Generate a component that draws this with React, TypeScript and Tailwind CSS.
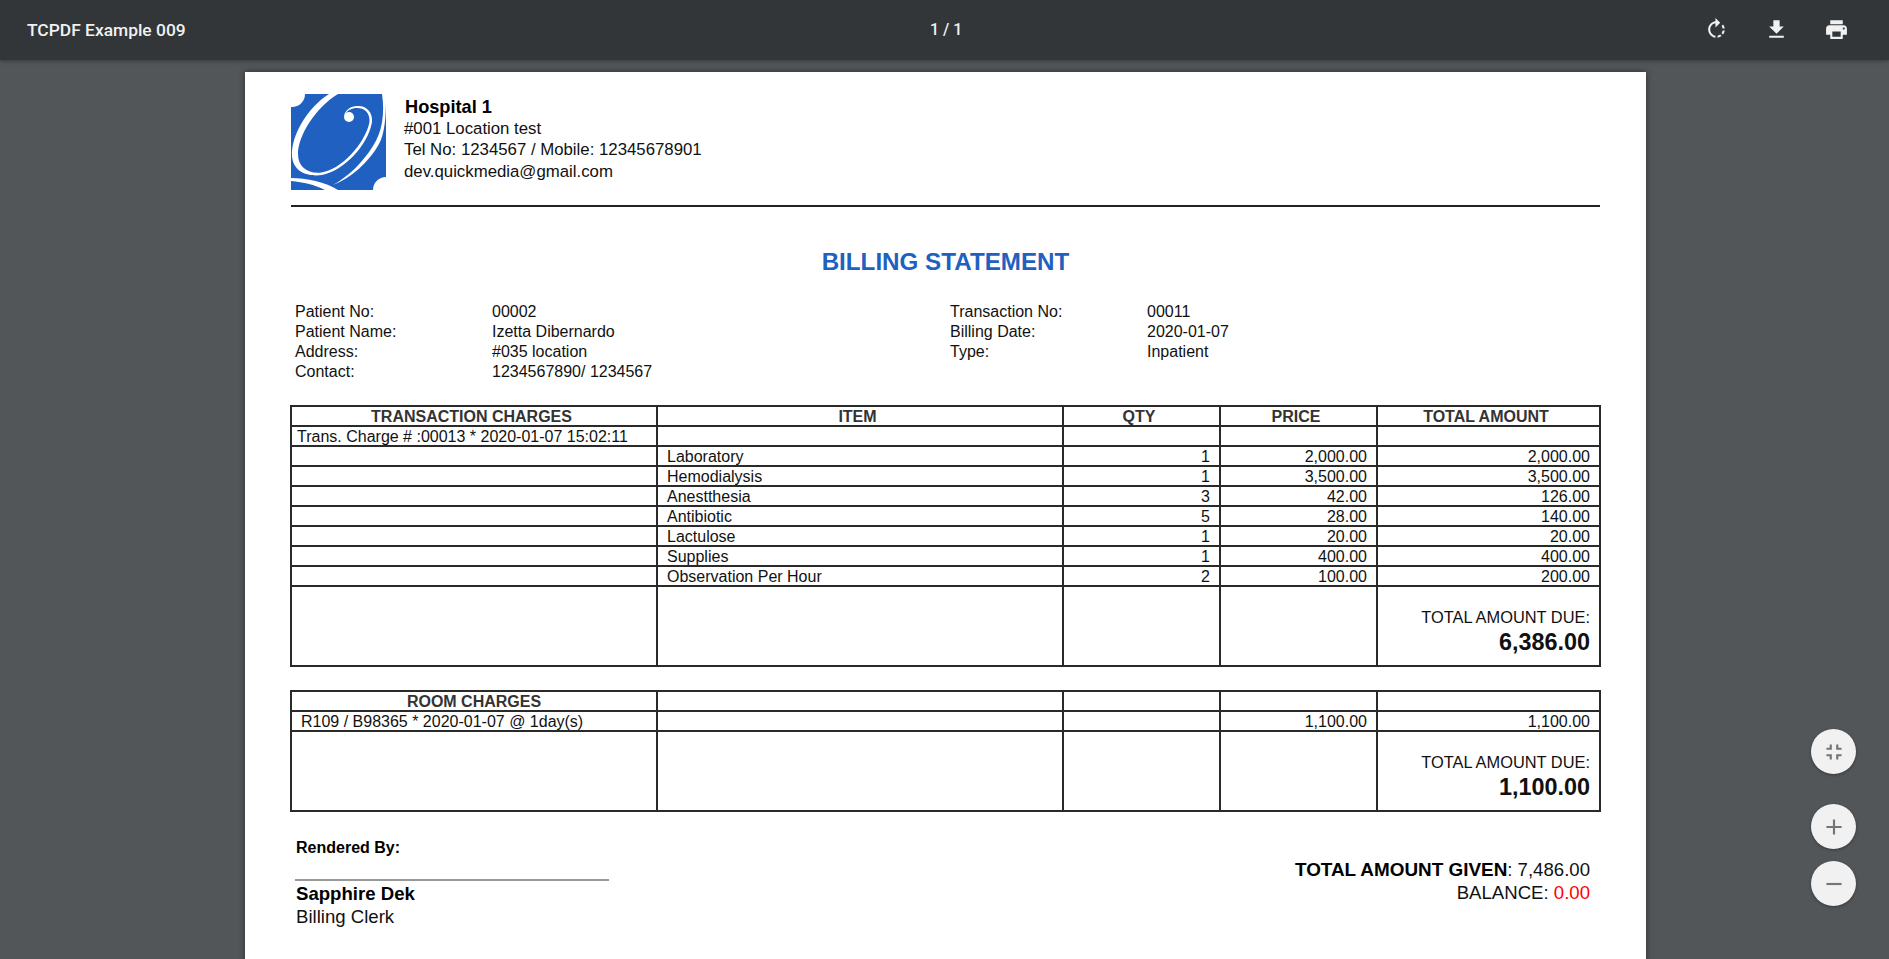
import React from 'react';

const CHARGES = [
  { item: 'Laboratory', qty: '1', price: '2,000.00', total: '2,000.00' },
  { item: 'Hemodialysis', qty: '1', price: '3,500.00', total: '3,500.00' },
  { item: 'Anestthesia', qty: '3', price: '42.00', total: '126.00' },
  { item: 'Antibiotic', qty: '5', price: '28.00', total: '140.00' },
  { item: 'Lactulose', qty: '1', price: '20.00', total: '20.00' },
  { item: 'Supplies', qty: '1', price: '400.00', total: '400.00' },
  { item: 'Observation Per Hour', qty: '2', price: '100.00', total: '200.00' }
];

const PATIENT = [
  ['Patient No:', '00002'],
  ['Patient Name:', 'Izetta Dibernardo'],
  ['Address:', '#035 location'],
  ['Contact:', '1234567890/ 1234567']
];

const BILLING = [
  ['Transaction No:', '00011'],
  ['Billing Date:', '2020-01-07'],
  ['Type:', 'Inpatient']
];

const cell = 'border-2 border-[#2a2a2a] h-[20px] p-0 pt-[2px] leading-[16px] align-middle overflow-hidden whitespace-nowrap';
const head = `${cell} font-bold text-[#333] text-center`;
const headPad = `${head} pr-[5px]`;
const circleBtn = 'w-[45px] h-[45px] rounded-full bg-[#f1f1f1] text-[#757575] flex items-center justify-center shadow-[0_1px_3px_rgba(0,0,0,0.35)]';

function Icon({ d, size = 25, className }: { d: string; size?: number; className?: string }) {
  return (
    <svg width={size} height={size} viewBox="0 0 24 24" fill="currentColor" className={className}>
      <path d={d} />
    </svg>
  );
}

function Logo() {
  return (
    <svg width="95" height="96" viewBox="0 0 95 96" className="shrink-0">
      <rect width="95" height="96" fill="#1f60c0" />
      <circle cx="1" cy="0" r="13" fill="#fff" />
      <circle cx="95" cy="96" r="13" fill="#fff" />
      <path fill="#fff" d="M38 0C16 14 0 42 1 62C2 78 17 83 31 81C52 77 77 52 81 28C82 17 74 11 66 12C60 12 54 16 53 22C56 16 61 14 66 14C73 14 79 18 78.5 28C74 50 50 76 30 78.5C18 80 7 74 7 60C7 42 24 14 47 0Z" />
      <circle cx="58" cy="23" r="5" fill="#fff" />
      <path fill="#fff" d="M91 0C94 20 91 38 82 52C72 68 58 82 42 91C60 84 78 68 88 50C94 40 95 20 95 5V0Z" />
      <path fill="#fff" d="M0 84C15 84 35 88 47 96H34C25 91 12 88 0 87Z" />
    </svg>
  );
}

function Columns() {
  return (
    <colgroup>
      <col className="w-[366px]" />
      <col className="w-[406px]" />
      <col className="w-[157px]" />
      <col className="w-[157px]" />
      <col className="w-[223px]" />
    </colgroup>
  );
}

function DueRow({ amount }: { amount: string }) {
  return (
    <tr>
      <td className="border-2 border-[#2a2a2a] h-[80px] p-0" />
      <td className="border-2 border-[#2a2a2a] p-0" />
      <td className="border-2 border-[#2a2a2a] p-0" />
      <td className="border-2 border-[#2a2a2a] p-0" />
      <td className="border-2 border-[#2a2a2a] p-0 pr-[9px] text-right align-top">
        <div className="mt-[20px] leading-[20px] text-[16.4px]">TOTAL AMOUNT DUE:</div>
        <div className="mt-[1px] leading-[28px] text-[23.4px] font-bold text-[#111]">{amount}</div>
      </td>
    </tr>
  );
}

export default function App() {
  return (
    <div className="h-screen overflow-hidden flex flex-col bg-[#525659] font-['Liberation_Sans',sans-serif]">
      {/* Toolbar */}
      <div className="relative z-10 h-[60px] shrink-0 flex items-center bg-[#323639] text-[#f1f1f1] shadow-[0_1px_4px_rgba(0,0,0,0.35)] font-['Roboto',sans-serif]">
        <div className="w-[1889px] flex items-center pl-[27px] pr-[40px]">
          <div className="w-[903px] text-[17.4px] font-medium">TCPDF Example 009</div>
          <div className="text-[16px] font-medium">1 / 1</div>
          <div className="ml-auto flex items-center gap-[35px]">
            <Icon d="M15.55 5.55L11 1v3.07C7.06 4.56 4 7.92 4 12s3.05 7.44 7 7.93v-2.02c-2.84-.48-5-2.94-5-5.91s2.16-5.43 5-5.91V10l4.55-4.45zM19.93 11c-.17-1.39-.72-2.73-1.62-3.89l-1.42 1.42c.54.75.88 1.6 1.02 2.47h2.02zM13 17.9v2.02c1.39-.17 2.74-.71 3.9-1.61l-1.44-1.44c-.75.54-1.59.89-2.46 1.03zm3.89-2.42l1.42 1.41c.9-1.16 1.45-2.5 1.62-3.89h-2.02c-.14.87-.48 1.72-1.02 2.48z" />
            <Icon d="M19 9h-4V3H9v6H5l7 7 7-7zM5 18v2h14v-2H5z" />
            <Icon d="M19 8H5c-1.66 0-3 1.34-3 3v6h4v4h12v-4h4v-6c0-1.66-1.34-3-3-3zm-3 11H8v-5h8v5zm3-7c-.55 0-1-.45-1-1s.45-1 1-1 1 .45 1 1-.45 1-1 1zm-1-9H6v4h12V3z" />
          </div>
        </div>
      </div>

      {/* Page */}
      <div className="relative flex-1 overflow-hidden">
        <div className="mt-[12px] ml-[245px] w-[1401px] h-[1000px] bg-white px-[46px] pt-[22px] text-[16px] text-[#111] shadow-[0_0_6px_rgba(0,0,0,0.45)]">
          {/* Hospital header */}
          <div className="flex items-start gap-[19px] h-[113px] border-b-2 border-[#222]">
            <Logo />
            <div className="pt-[2px]">
              <div className="text-[18.2px] font-bold text-black leading-[22px]">Hospital 1</div>
              <div className="text-[16.8px] leading-[21.3px] -ml-[1px]">#001 Location test</div>
              <div className="text-[16.8px] leading-[21.3px] -ml-[1px]">Tel No: 1234567 / Mobile: 12345678901</div>
              <div className="text-[16.8px] leading-[21.3px] -ml-[1px]">dev.quickmedia@gmail.com</div>
            </div>
          </div>

          <h1 className="mt-[41px] text-center text-[24.2px] leading-[28px] font-bold text-[#1f60c0]">BILLING STATEMENT</h1>

          {/* Patient info */}
          <div className="mt-[26px] flex pl-[4px] leading-[20px]">
            <div className="w-[655px]">
              {PATIENT.map(([label, value]) => (
                <div key={label} className="flex">
                  <div className="w-[197px]">{label}</div>
                  <div>{value}</div>
                </div>
              ))}
            </div>
            <div>
              {BILLING.map(([label, value]) => (
                <div key={label} className="flex">
                  <div className="w-[197px]">{label}</div>
                  <div>{value}</div>
                </div>
              ))}
            </div>
          </div>

          {/* Transaction charges */}
          <table className="mt-[23px] -ml-[1px] w-[1309px] table-fixed border-collapse border-[#2a2a2a]">
            <Columns />
            <thead>
              <tr>
                <th className={headPad}>TRANSACTION CHARGES</th>
                <th className={headPad}>ITEM</th>
                <th className={headPad}>QTY</th>
                <th className={headPad}>PRICE</th>
                <th className={headPad}>TOTAL AMOUNT</th>
              </tr>
            </thead>
            <tbody>
              <tr>
                <td className={`${cell} pl-[5px]`}>Trans. Charge # :00013 * 2020-01-07 15:02:11</td>
                <td className={cell} />
                <td className={cell} />
                <td className={cell} />
                <td className={cell} />
              </tr>
              {CHARGES.map((row) => (
                <tr key={row.item}>
                  <td className={cell} />
                  <td className={`${cell} pl-[9px]`}>{row.item}</td>
                  <td className={`${cell} pr-[9px] text-right`}>{row.qty}</td>
                  <td className={`${cell} pr-[9px] text-right`}>{row.price}</td>
                  <td className={`${cell} pr-[9px] text-right`}>{row.total}</td>
                </tr>
              ))}
              <DueRow amount="6,386.00" />
            </tbody>
          </table>

          {/* Room charges */}
          <table className="mt-[23px] -ml-[1px] w-[1309px] table-fixed border-collapse border-[#2a2a2a]">
            <Columns />
            <thead>
              <tr>
                <th className={head}>ROOM CHARGES</th>
                <th className={head} />
                <th className={head} />
                <th className={head} />
                <th className={head} />
              </tr>
            </thead>
            <tbody>
              <tr>
                <td className={`${cell} pl-[9px]`}>R109 / B98365 * 2020-01-07 @ 1day(s)</td>
                <td className={cell} />
                <td className={cell} />
                <td className={`${cell} pr-[9px] text-right`}>1,100.00</td>
                <td className={`${cell} pr-[9px] text-right`}>1,100.00</td>
              </tr>
              <DueRow amount="1,100.00" />
            </tbody>
          </table>

          {/* Signature and totals */}
          <div className="mt-[26px] flex justify-between pl-[4px] pr-[10px]">
            <div className="w-[314px]">
              <div className="font-bold text-black leading-[20px] pl-[1px]">Rendered By:</div>
              <div className="mt-[21px] border-t-2 border-[#999] pt-[1px] pl-[1px] text-[18.6px] leading-[23px]">
                <div className="font-bold text-black">Sapphire Dek</div>
                <div>Billing Clerk</div>
              </div>
            </div>
            <div className="mt-[20px] text-right text-[18.6px] leading-[23px]">
              <div>
                <span className="font-bold text-black text-[18.9px]">TOTAL AMOUNT GIVEN</span>: 7,486.00
              </div>
              <div>
                BALANCE: <span className="text-[#ff0000]">0.00</span>
              </div>
            </div>
          </div>
        </div>

        {/* Zoom controls */}
        <div className="absolute right-[33px] top-[669px] flex flex-col items-center">
          <button className={circleBtn}>
            <Icon size={26} d="M5 16h3v3h2v-5H5v2zm3-8H5v2h5V5H8v3zm6 11h2v-3h3v-2h-5v5zm2-11V5h-2v5h5V8h-3z" />
          </button>
          <button className={`mt-[30px] ${circleBtn}`}>
            <Icon size={26} d="M19 13h-6v6h-2v-6H5v-2h6V5h2v6h6v2z" />
          </button>
          <button className={`mt-[12px] ${circleBtn}`}>
            <Icon size={26} d="M19 13H5v-2h14v2z" />
          </button>
        </div>
      </div>
    </div>
  );
}
